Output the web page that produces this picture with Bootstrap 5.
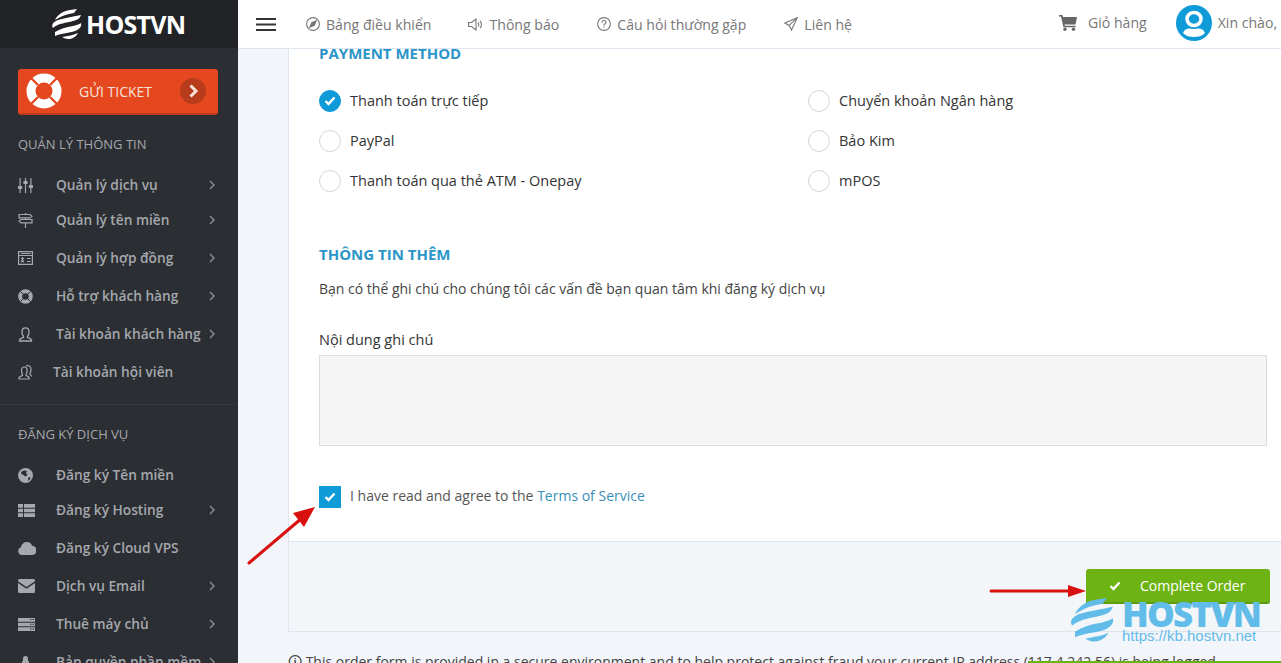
<!DOCTYPE html>
<html lang="vi">
<head>
  <meta charset="UTF-8" />
  <meta name="viewport" content="width=device-width, initial-scale=1.0"/>
  <title>HOSTVN - Complete Order</title>
  <link href="https://cdn.jsdelivr.net/npm/bootstrap@5.3.0/dist/css/bootstrap.min.css" rel="stylesheet">
  <style>
    body {
      background: #f2f5f9;
      font-family: "Open Sans", sans-serif;
      font-size: 14px;
      color: #333;
      overflow: hidden;
    }
    .app-shell { height: 663px; }

    /* sidebar */
    .side-bar { width: 238px; background: #2b2e33; overflow: hidden; }
    .side-logo { height: 48px; background: #212327; padding-left: 52px; gap: 4px; }
    .side-logo span { font-size: 25px; font-weight: 700; color: #fff; letter-spacing: -.75px; line-height: 1; }
    .ticket-btn {
      margin: 21px 20px 0 18px; height: 46px; padding: 0 12px 0 8px; background: #e5481f;
      border-bottom: 2px solid #bf3d1c; border-radius: 3px; color: #f5e3dc;
      font-size: 14px; font-weight: 500; text-decoration: none;
    }
    .ticket-btn b { font-weight: 500; margin-left: 17px; flex-grow: 1; }
    .side-title { padding-left: 18px; font-size: 13px; color: #a5a8ac; line-height: 18px; }
    .side-link {
      height: 38px; padding-left: 18px; color: #a5a8ac; font-size: 13.7px; font-weight: 600;
      text-decoration: none; white-space: nowrap;
    }
    .side-link:first-child { margin-bottom: -3px; }
    .side-link .ico { width: 38px; flex-shrink: 0; line-height: 0; }
    .side-link .lbl { flex-grow: 1; }
    .side-link .chev { margin-right: 23px; line-height: 0; }
    .side-rule { border-top: 1px solid #35383d; margin-top: 13px; }

    /* top bar */
    .top-bar { height: 49px; background: #fff; border-bottom: 1px solid #dfe5ee; padding-left: 18px; white-space: nowrap; overflow: hidden; }
    .top-item { color: #777; font-size: 14.1px; text-decoration: none; gap: 6px; }
    .top-nav-link { padding-top: 1px; }

    /* order form */
    .main-area { overflow: hidden; }
    .order-panel { margin-left: 50px; border: solid #dfe5ee; border-width: 0 0 1px 1px; background: #fff; }
    .panel-body-area { padding: 0 14px 0 30px; height: 498px; }
    .sect-head { color: #2c95c8; font-size: 15px; font-weight: 700; text-transform: uppercase; line-height: 20px; margin: 0; }
    .pay-grid { display: grid; grid-template-columns: 489px 1fr; row-gap: 18px; margin-top: 27px; }
    .pay-opt { gap: 9px; height: 22px; font-size: 14.5px; font-weight: 500; }
    .radio-dot { width: 22px; height: 22px; border: 1px solid #d5d5d5; border-radius: 50%; background: #fff; flex-shrink: 0; }
    .radio-dot.is-on { background: #0f9ad8; border-color: #0f9ad8; }
    .note-text { font-size: 14px; color: #444; line-height: 20px; margin: 15px 0 0; }
    .note-label { font-size: 14.5px; font-weight: 500; line-height: 20px; margin: 31px 0 5px; display: block; }
    .note-box { height: 91px; background: #f5f5f5; border: 1px solid #ddd; }
    .agree-row { gap: 9px; margin-top: 39px; color: #555; }
    .agree-row > span:last-child { padding-bottom: 2px; }
    .check-box { width: 22px; height: 22px; background: #0f9ad8; flex-shrink: 0; }
    .agree-row a { color: #3a8fb7; text-decoration: none; }
    .panel-foot { height: 90px; background: #f3f6f9; border-top: 1px solid #dfe5ee; padding: 27px 11px 0 0; }
    .order-btn {
      width: 184px; height: 35px; background: #6db313; border: 0; border-bottom: 2px solid #5e9a10;
      border-radius: 3px; color: #fff; font-size: 14px; gap: 19px; padding: 0 0 0 23px;
    }
    .fine-print { margin: 20px 0 0 50px; font-size: 14px; color: #444; white-space: nowrap; line-height: 20px; }

    /* overlays */
    .arrow-one { position: absolute; left: 244px; top: 502px; }
    .arrow-two { position: absolute; left: 988px; top: 582px; }
    .wm-mark { position: absolute; left: 1070px; top: 598px; gap: 7px; color: #62bce9; }
    .wm-name { font-size: 35px; font-weight: 800; line-height: 31px; letter-spacing: -1.8px; }
    .wm-url { font-family: "Liberation Sans", sans-serif; font-size: 15px; line-height: 14px; }
    .green-strip { position: absolute; left: 1028px; right: 0; bottom: 0; height: 2px; background: #6db313; }
  </style>
</head>
<body>

<div class="app-shell d-flex position-relative">

  <aside class="side-bar flex-shrink-0">
    <div class="side-logo d-flex align-items-center">
      <svg width="30" height="31" viewBox="0 0 30 31"><g fill="#fff"><path d="M3 11C5 6 11 2 18 1l7-1-3 4-5 1C12 6 8 8 3 11z"/><path d="M1 19c-2-3 0-6 5-8 6-2 14-3 23-5-1 3-3 5-8 6-7 2-14 2-20 7z"/><path d="M3 23c5-3 11-5 18-6 4-1 7-2 8-3 1 3-1 6-6 8-6 2-13 2-20 5z"/><path d="M10 28c6-1 12-2 16-4-2 4-6 6-10 6-2 0-4-1-6-2z"/></g></svg>
      <span>HOSTVN</span>
    </div>

    <a class="ticket-btn d-flex align-items-center" href="#">
      <svg width="36" height="36" viewBox="0 0 36 36"><circle cx="18" cy="18" r="13" fill="none" stroke="#fff" stroke-width="9"/><g stroke="#e5481f" stroke-width="2.4"><path d="M5 5l7 7M31 5l-7 7M5 31l7-7M31 31l-7-7"/></g></svg>
      <b>GỬI TICKET</b>
      <svg width="26" height="26" viewBox="0 0 26 26"><circle cx="13" cy="13" r="13" fill="#b83c1c"/><path d="M10.500 7.500 16 13l-5.500 5.500" fill="none" stroke="#f5e3dc" stroke-width="3"/></svg>
    </a>

    <div class="side-title" style="margin-top:20px">QUẢN LÝ THÔNG TIN</div>
    <nav style="margin-top:13px">
      <a class="side-link d-flex align-items-center" href="#">
        <span class="ico"><svg width="15" height="15" viewBox="0 0 15 15" fill="#a5a8ac"><path d="M1.500 0h1.200v15H1.500zM6.900 0h1.200v15H6.900zM12.300 0h1.200v15h-1.200z"/><path d="M0 8h4.200v3H0zM5.400 3h4.200v3H5.400zM10.800 7h4.200v3h-4.200z"/></svg></span>
        <span class="lbl">Quản lý dịch vụ</span>
        <span class="chev"><svg width="6" height="10" viewBox="0 0 6 10"><path d="M1 1l4 4-4 4" fill="none" stroke="#8d9094" stroke-width="1.400"/></svg></span>
      </a>
      <a class="side-link d-flex align-items-center" href="#">
        <span class="ico"><svg width="15" height="15" viewBox="0 0 15 15" fill="none" stroke="#a5a8ac" stroke-width="1.200"><path d="M1 1.500h11l2 1.700-2 1.700H1zM14 6.500H3L1 8.200l2 1.700h11zM7.500 5v1.500M7.500 10v5M7.500 0v1.500"/></svg></span>
        <span class="lbl">Quản lý tên miền</span>
        <span class="chev"><svg width="6" height="10" viewBox="0 0 6 10"><path d="M1 1l4 4-4 4" fill="none" stroke="#8d9094" stroke-width="1.400"/></svg></span>
      </a>
      <a class="side-link d-flex align-items-center" href="#">
        <span class="ico"><svg width="15" height="14" viewBox="0 0 15 14" fill="none" stroke="#a5a8ac" stroke-width="1.200"><path d="M.6.6h13.800v12.800H.6zM.6 4.500h13.800M3 7.500h3M4.500 6v3M3 11l3-1.500M3 9.500 6 11M9 7.500h3.500M9 10.500h3.500M3 2.500h9.500"/></svg></span>
        <span class="lbl">Quản lý hợp đồng</span>
        <span class="chev"><svg width="6" height="10" viewBox="0 0 6 10"><path d="M1 1l4 4-4 4" fill="none" stroke="#8d9094" stroke-width="1.400"/></svg></span>
      </a>
      <a class="side-link d-flex align-items-center" href="#">
        <span class="ico"><svg width="15" height="15" viewBox="0 0 15 15" fill="none" stroke="#a5a8ac"><circle cx="7.500" cy="7.500" r="5.300" stroke-width="4"/><path d="M2.500 2.500l3 3M12.500 2.500l-3 3M2.500 12.500l3-3M12.500 12.500l-3-3" stroke="#2b2e33" stroke-width="1"/></svg></span>
        <span class="lbl">Hỗ trợ khách hàng</span>
        <span class="chev"><svg width="6" height="10" viewBox="0 0 6 10"><path d="M1 1l4 4-4 4" fill="none" stroke="#8d9094" stroke-width="1.400"/></svg></span>
      </a>
      <a class="side-link d-flex align-items-center" href="#">
        <span class="ico"><svg width="15" height="15" viewBox="0 0 15 15" fill="none" stroke="#a5a8ac" stroke-width="1.300"><path d="M5.500 9.500C4 8 4 6.500 4 4.500 4 2 5.500.8 7.500.8S11 2 11 4.500c0 2 0 3.500-1.500 5v1c1.500.7 3.500 1 4 2.500v1H1.500v-1c.5-1.500 2.500-1.800 4-2.500z"/></svg></span>
        <span class="lbl">Tài khoản khách hàng</span>
        <span class="chev"><svg width="6" height="10" viewBox="0 0 6 10"><path d="M1 1l4 4-4 4" fill="none" stroke="#8d9094" stroke-width="1.400"/></svg></span>
      </a>
      <a class="side-link d-flex align-items-center" href="#">
        <span class="ico" style="width:35px"><svg width="15" height="15" viewBox="0 0 15 15" fill="none" stroke="#a5a8ac" stroke-width="1.200"><path d="M4.500 9.500C3.500 8 3.500 7 3.500 5 3.500 3 4.800 2 6.300 2s2.800 1 2.800 3c0 2 0 3-1 4.500v1c1 .5 2.500.8 3 2v1.500H1v-1.500c.5-1.200 2.500-1.500 3.500-2zM8 1c2-1 5 0 5 3 0 2 0 3-1 4.500v1c1 .5 1.500 1 2 2"/></svg></span>
        <span class="lbl">Tài khoản hội viên</span>
      </a>
    </nav>
    <div class="side-rule"></div>

    <div class="side-title" style="margin-top:20px">ĐĂNG KÝ DỊCH VỤ</div>
    <nav style="margin-top:13px">
      <a class="side-link d-flex align-items-center" href="#">
        <span class="ico"><svg width="15" height="15" viewBox="0 0 15 15"><circle cx="7.500" cy="7.500" r="7.500" fill="#a5a8ac"/><path d="M3 4l3-1.500L9 3 8 5 9.500 7 7.500 8.500 5.500 7 3.500 6zM10 10l2-1 .5 1.500L10.500 13z" fill="#2b2e33"/></svg></span>
        <span class="lbl">Đăng ký Tên miền</span>
      </a>
      <a class="side-link d-flex align-items-center" href="#">
        <span class="ico"><svg width="17" height="13" viewBox="0 0 17 13" fill="#a5a8ac"><path d="M0 0h5v3.700H0zM6 0h11v3.700H6zM0 4.700h5v3.600H0zM6 4.700h11v3.600H6zM0 9.300h5V13H0zM6 9.300h11V13H6z"/></svg></span>
        <span class="lbl">Đăng ký Hosting</span>
        <span class="chev"><svg width="6" height="10" viewBox="0 0 6 10"><path d="M1 1l4 4-4 4" fill="none" stroke="#8d9094" stroke-width="1.400"/></svg></span>
      </a>
      <a class="side-link d-flex align-items-center" href="#">
        <span class="ico"><svg width="18" height="13" viewBox="0 0 18 13" fill="#a5a8ac"><path d="M4 13a4 4 0 0 1-1-7.800C3.500 2 6 0 9 0c2.500 0 4.500 1.500 5 3.800A4.600 4.600 0 0 1 14 13z"/></svg></span>
        <span class="lbl">Đăng ký Cloud VPS</span>
      </a>
      <a class="side-link d-flex align-items-center" href="#">
        <span class="ico"><svg width="17" height="14" viewBox="0 0 17 14" fill="#a5a8ac"><path d="M1.500 0h14A1.500 1.500 0 0 1 17 1.500v.7L8.500 8 0 2.200v-.7A1.500 1.500 0 0 1 1.500 0z"/><path d="M0 4v8.500A1.500 1.500 0 0 0 1.500 14h14a1.500 1.500 0 0 0 1.500-1.500V4L8.500 9.800z"/></svg></span>
        <span class="lbl">Dịch vụ Email</span>
        <span class="chev"><svg width="6" height="10" viewBox="0 0 6 10"><path d="M1 1l4 4-4 4" fill="none" stroke="#8d9094" stroke-width="1.400"/></svg></span>
      </a>
      <a class="side-link d-flex align-items-center" href="#">
        <span class="ico"><svg width="17" height="13" viewBox="0 0 17 13" fill="#a5a8ac"><path d="M0 0h17v3.700H0zM0 4.700h17v3.600H0zM0 9.300h17V13H0z"/><path d="M12 1.500h1.500M14.500 1.500H16M12 6.300h1.500M14.500 6.300H16M12 11h1.500M14.500 11H16" stroke="#2b2e33"/></svg></span>
        <span class="lbl">Thuê máy chủ</span>
        <span class="chev"><svg width="6" height="10" viewBox="0 0 6 10"><path d="M1 1l4 4-4 4" fill="none" stroke="#8d9094" stroke-width="1.400"/></svg></span>
      </a>
      <a class="side-link d-flex align-items-center" href="#">
        <span class="ico"><svg width="17" height="14" viewBox="0 0 17 14" fill="#a5a8ac"><path d="M5 6V3.500a2.500 2.500 0 0 1 5 0V6h1v8H4V6z"/></svg></span>
        <span class="lbl">Bản quyền phần mềm</span>
        <span class="chev"><svg width="6" height="10" viewBox="0 0 6 10"><path d="M1 1l4 4-4 4" fill="none" stroke="#8d9094" stroke-width="1.400"/></svg></span>
      </a>
    </nav>
  </aside>

  <div class="flex-grow-1 d-flex flex-column" style="min-width:0">
    <header class="top-bar d-flex align-items-center flex-shrink-0">
      <svg width="20" height="13" viewBox="0 0 20 13" fill="#333" style="margin-right:30px"><path d="M0 0h20v2H0zM0 5.500h20v2H0zM0 11h20v2H0z"/></svg>
      <a class="top-item top-nav-link d-flex align-items-center" href="#" style="margin-right:37px">
        <svg width="14" height="14" viewBox="0 0 14 14" fill="none" stroke="#777" stroke-width="1.100"><circle cx="7" cy="7" r="6.400"/><path d="M10.200 3.800 8.300 8.300 3.800 10.200 5.700 5.700z" fill="#777"/></svg>
        Bảng điều khiển
      </a>
      <a class="top-item top-nav-link d-flex align-items-center" href="#" style="margin-right:38px">
        <svg width="15" height="13" viewBox="0 0 15 13" fill="none" stroke="#777" stroke-width="1.100"><path d="M.6 4.500h3L8 1v11L3.600 8.500h-3zM10 4.500c1 1 1 3 0 4M12 3c2 2 2 5 0 7"/></svg>
        Thông báo
      </a>
      <a class="top-item top-nav-link d-flex align-items-center" href="#" style="margin-right:38px">
        <svg width="14" height="14" viewBox="0 0 14 14" fill="none" stroke="#777" stroke-width="1.100"><circle cx="7" cy="7" r="6.400"/><path d="M5 5.400C5 4 6 3.500 7 3.500s2 .7 2 1.800C9 6.800 7 6.800 7 8.500M7 9.500v1.300"/></svg>
        Câu hỏi thường gặp
      </a>
      <a class="top-item top-nav-link d-flex align-items-center" href="#">
        <svg width="14" height="14" viewBox="0 0 14 14" fill="none" stroke="#777" stroke-width="1.100"><path d="M13.300.7.800 6l4.400 2.400L7.500 13zM13.300.7 5.200 8.400"/></svg>
        Liên hệ
      </a>
      <div class="d-flex align-items-center" style="margin-left:auto;width:222px;flex-shrink:0;margin-bottom:3px">
        <svg width="18" height="16" viewBox="0 0 18 16" fill="#666"><path d="M0 0h3.500l.6 2H18l-1.500 7.500H5.500l.3 1.300H16.500V12.300H4.400L2 1.500H0z"/><circle cx="6" cy="14.300" r="1.700"/><circle cx="14.500" cy="14.300" r="1.700"/></svg>
        <span class="top-item" style="margin-left:11px">Giỏ hàng</span>
        <svg width="36" height="36" viewBox="0 0 36 36" style="margin-left:29px"><circle cx="18" cy="18" r="18" fill="#0f9ad8"/><ellipse cx="18" cy="14" rx="7" ry="6.500" fill="none" stroke="#fff" stroke-width="3.500"/><path d="M7 28c2-5 6-5 11-4 5-1 9-1 11 4-3 3-7 4-11 4s-8-1-11-4z" fill="#fff"/></svg>
        <span class="top-item" style="margin-left:6px">Xin chào,</span>
      </div>
    </header>

    <main class="main-area flex-grow-1">
      <div class="order-panel">
        <div class="panel-body-area">
          <h5 class="sect-head" style="margin-top:-6px">Payment Method</h5>
          <div class="pay-grid">
            <div class="pay-opt d-flex align-items-center">
              <span class="radio-dot is-on d-flex align-items-center justify-content-center"><svg width="12" height="10" viewBox="0 0 12 10"><path d="M1.500 5l3 3 6-6.500" fill="none" stroke="#fff" stroke-width="2.400"/></svg></span>
              Thanh toán trực tiếp
            </div>
            <div class="pay-opt d-flex align-items-center"><span class="radio-dot"></span>Chuyển khoản Ngân hàng</div>
            <div class="pay-opt d-flex align-items-center"><span class="radio-dot"></span>PayPal</div>
            <div class="pay-opt d-flex align-items-center"><span class="radio-dot"></span>Bảo Kim</div>
            <div class="pay-opt d-flex align-items-center"><span class="radio-dot"></span>Thanh toán qua thẻ ATM - Onepay</div>
            <div class="pay-opt d-flex align-items-center"><span class="radio-dot"></span>mPOS</div>
          </div>

          <h5 class="sect-head" style="margin-top:52px">Thông tin thêm</h5>
          <p class="note-text">Bạn có thể ghi chú cho chúng tôi các vấn đề bạn quan tâm khi đăng ký dịch vụ</p>
          <label class="note-label">Nội dung ghi chú</label>
          <div class="note-box"></div>

          <div class="agree-row d-flex align-items-center">
            <span class="check-box d-flex align-items-center justify-content-center"><svg width="12" height="10" viewBox="0 0 12 10"><path d="M1.500 5l3 3 6-6.500" fill="none" stroke="#fff" stroke-width="2.400"/></svg></span>
            <span>I have read and agree to the <a href="#">Terms of Service</a></span>
          </div>
        </div>
        <div class="panel-foot d-flex justify-content-end">
          <button class="order-btn d-flex align-items-center" type="button">
            <svg width="12" height="10" viewBox="0 0 12 10"><path d="M1.500 5l3 3 6-6.500" fill="none" stroke="#fff" stroke-width="2.400"/></svg>
            Complete Order
          </button>
        </div>
      </div>
      <p class="fine-print">🛈 This order form is provided in a secure environment and to help protect against fraud your current IP address (117.4.242.56) is being logged.</p>
    </main>
  </div>

  <!-- annotations drawn over the screenshot -->
  <svg class="arrow-one" width="74" height="66" viewBox="0 0 74 66"><path d="M5 61 58 16" stroke="#d8100f" stroke-width="3" stroke-linecap="round"/><path d="M71 5 49 11l11 14z" fill="#d8100f"/></svg>
  <svg class="arrow-two" width="100" height="18" viewBox="0 0 100 18"><path d="M3 9h80" stroke="#d8100f" stroke-width="3" stroke-linecap="round"/><path d="M98 9 80 3v12z" fill="#d8100f"/></svg>

  <div class="wm-mark d-flex">
    <svg width="45" height="45" viewBox="0 0 30 31" fill="#62bce9"><path d="M3 11C5 6 11 2 18 1l7-1-3 4-5 1C12 6 8 8 3 11z"/><path d="M1 19c-2-3 0-6 5-8 6-2 14-3 23-5-1 3-3 5-8 6-7 2-14 2-20 7z"/><path d="M3 23c5-3 11-5 18-6 4-1 7-2 8-3 1 3-1 6-6 8-6 2-13 2-20 5z"/><path d="M10 28c6-1 12-2 16-4-2 4-6 6-10 6-2 0-4-1-6-2z"/></svg>
    <div>
      <div class="wm-name">HOSTVN</div>
      <div class="wm-url">https://kb.hostvn.net</div>
    </div>
  </div>
  <div class="green-strip"></div>
</div>

<script src="https://cdn.jsdelivr.net/npm/bootstrap@5.3.0/dist/js/bootstrap.bundle.min.js"></script>
</body>
</html>
